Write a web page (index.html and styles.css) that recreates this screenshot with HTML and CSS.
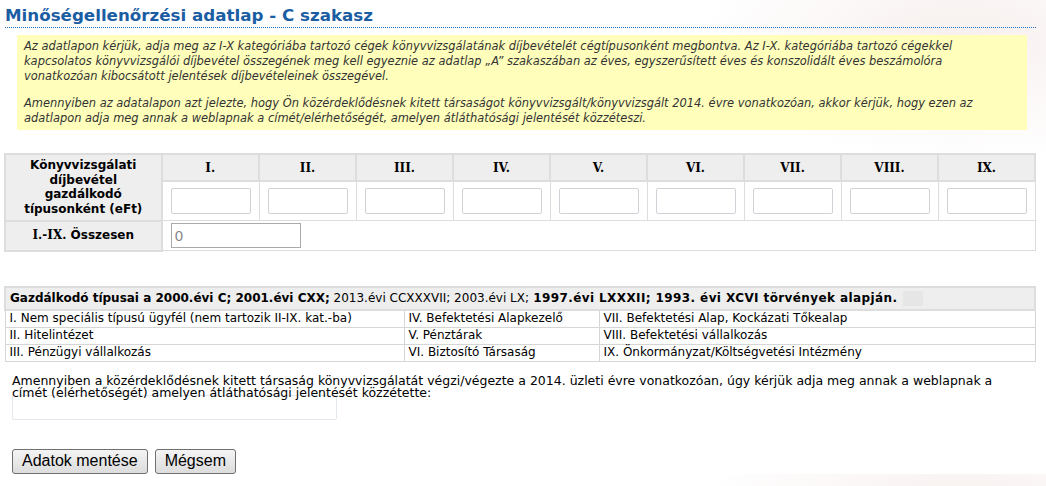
FILE: index.html
```html
<!DOCTYPE html>
<html lang="hu">

<head>
    <meta charset="UTF-8">
    <title>Minőségellenőrzési adatlap - C szakasz</title>
    <link rel="stylesheet" href="styles.css">
</head>

<body>
    <div class="page">
        <h1 class="title">Minőségellenőrzési adatlap - C szakasz</h1>

        <div class="notice">
            <p>Az adatlapon kérjük, adja meg az I-X kategóriába tartozó cégek könyvvizsgálatának díjbevételét cégtípusonként megbontva. Az I-X. kategóriába tartozó cégekkel<br>
                kapcsolatos könyvvizsgálói díjbevétel összegének meg kell egyeznie az adatlap „A” szakaszában az éves, egyszerűsített éves és konszolidált éves beszámolóra<br>
                vonatkozóan kibocsátott jelentések díjbevételeinek összegével.</p>
            <p>Amennyiben az adatalapon azt jelezte, hogy Ön közérdeklődésnek kitett társaságot könyvvizsgált/könyvvizsgált 2014. évre vonatkozóan, akkor kérjük, hogy ezen az<br>
                adatlapon adja meg annak a weblapnak a címét/elérhetőségét, amelyen átláthatósági jelentését közzéteszi.</p>
        </div>

        <table class="fees">
            <tr class="head-row">
                <th class="label" rowspan="2">Könyvvizsgálati díjbevétel gazdálkodó típusonként (eFt)</th>
                <th>I.</th>
                <th>II.</th>
                <th>III.</th>
                <th>IV.</th>
                <th>V.</th>
                <th>VI.</th>
                <th>VII.</th>
                <th>VIII.</th>
                <th>IX.</th>
            </tr>
            <tr class="input-row">
                <td><input type="text"></td>
                <td><input type="text"></td>
                <td><input type="text"></td>
                <td><input type="text"></td>
                <td><input type="text"></td>
                <td><input type="text"></td>
                <td><input type="text"></td>
                <td><input type="text"></td>
                <td><input type="text"></td>
            </tr>
            <tr class="sum-row">
                <th class="label"><span class="roman">I.-IX.</span> Összesen</th>
                <td colspan="9"><input type="text" class="sum" value="0"></td>
            </tr>
        </table>

        <table class="types">
            <tr>
                <th colspan="3">Gazdálkodó típusai a 2000.évi C; 2001.évi CXX;<span class="plain"> 2013.évi CCXXXVII; 2003.évi LX;</span> <span class="wide">1997.évi LXXXII; 1993. évi XCVI törvények alapján.</span><span class="blank"></span></th>
            </tr>
            <tr>
                <td class="c1">I. Nem speciális típusú ügyfél (nem tartozik II-IX. kat.-ba)</td>
                <td class="c2">IV. Befektetési Alapkezelő</td>
                <td>VII. Befektetési Alap, Kockázati Tőkealap</td>
            </tr>
            <tr>
                <td class="c1">II. Hitelintézet</td>
                <td class="c2">V. Pénztárak</td>
                <td>VIII. Befektetési vállalkozás</td>
            </tr>
            <tr>
                <td class="c1">III. Pénzügyi vállalkozás</td>
                <td class="c2">VI. Biztosító Társaság</td>
                <td>IX. Önkormányzat/Költségvetési Intézmény</td>
            </tr>
        </table>

        <div class="weblap">
            <p>Amennyiben a közérdeklődésnek kitett társaság könyvvizsgálatát végzi/végezte a 2014. üzleti évre vonatkozóan, úgy kérjük adja meg annak a weblapnak a címét (elérhetőségét) amelyen átláthatósági jelentését közzétette:</p>
            <input type="text" class="url">
        </div>

        <div class="actions">
            <button class="btn">Adatok mentése</button>
            <button class="btn">Mégsem</button>
        </div>
    </div>
</body>

</html>
```

FILE: styles.css
```css
body {
    margin: 0;
    padding: 0;
    font-family: "DejaVu Sans", Verdana, sans-serif;
    font-size: 12px;
    color: #000;
    background: #fff radial-gradient(ellipse 260px 120px at 960px 40px, #f7f0ee, #fff);
}

.page {
    padding: 5px 10px 0 4px;
}

.title {
    margin: 0 0 0 1px;
    padding-bottom: 2px;
    font-size: 16.7px;
    font-weight: bold;
    color: #1b5da3;
    border-bottom: 1px dotted #1f6fc0;
}

.notice {
    margin: 7px 9px 0 13px;
    padding: 4px 7px 4px;
    background-color: #ffffbb;
    font-size: 11.45px;
    font-style: italic;
    line-height: 15px;
    color: #333;
}

.notice p {
    margin: 0 0 12px;
}

.notice p:last-child {
    margin-bottom: 0;
}

.fees {
    width: 1032px;
    margin-top: 23px;
    border-collapse: collapse;
}

.fees th {
    background-color: #eee;
    border: 2px solid #ddd;
    font-family: "DejaVu Serif", Georgia, serif;
    font-size: 12px;
    height: 25px;
    padding: 0;
}

.fees th.label {
    width: 154px;
    font-family: "DejaVu Sans", Verdana, sans-serif;
    font-size: 12px;
    line-height: 14.5px;
    padding: 0 4px;
}

.fees .roman {
    font-family: "DejaVu Serif", Georgia, serif;
}

.fees td {
    border: 1px solid #ddd;
    padding: 6px 8px;
}

.fees input {
    box-sizing: border-box;
    width: 80px;
    height: 26px;
    border: 1px solid #cfd3d8;
    border-radius: 2px;
    display: block;
}

.fees .sum-row td {
    padding: 2px 8px 2px;
}

.fees input.sum {
    width: 130px;
    height: 25px;
    border-color: #a9a9a9;
    border-radius: 0;
    padding: 0 3px;
    font-family: "DejaVu Sans", Verdana, sans-serif;
    font-size: 14px;
    color: #888;
}

.types {
    width: 1032px;
    margin-top: 34px;
    border-collapse: collapse;
}

.types th {
    background-color: #eee;
    border: 2px solid #ddd;
    text-align: left;
    padding: 3px 4px;
    font-size: 12px;
}

.types .plain {
    font-weight: normal;
}

.types .wide {
    letter-spacing: 0.4px;
}

.types .blank {
    display: inline-block;
    width: 20px;
    height: 15px;
    margin-left: 6px;
    vertical-align: middle;
    background-color: #e6e6e6;
}

.types td {
    border: 1px solid #d6d6d6;
    padding: 0 4px;
    height: 16px;
    line-height: 15px;
}

.types td.c1 {
    width: 390px;
}

.types td.c2 {
    width: 186px;
}

.weblap {
    margin: 13px 0 0 8px;
}

.weblap p {
    margin: 0;
    line-height: 12px;
    font-size: 12.5px;
    width: 1010px;
}

.url {
    box-sizing: border-box;
    display: block;
    width: 325px;
    height: 25px;
    margin-top: -4px;
    border: 1px solid #e3e8ee;
    border-radius: 2px;
}

.actions {
    display: flex;
    gap: 7px;
    margin: 29px 0 0 8px;
}

.btn {
    height: 25px;
    padding: 0 9px;
    font-family: "Liberation Sans", Arial, sans-serif;
    font-size: 16px;
    color: #000;
    background: linear-gradient(#f4f4f4, #dcdcdc);
    border: 1px solid #707070;
    border-radius: 3px;
}
```
